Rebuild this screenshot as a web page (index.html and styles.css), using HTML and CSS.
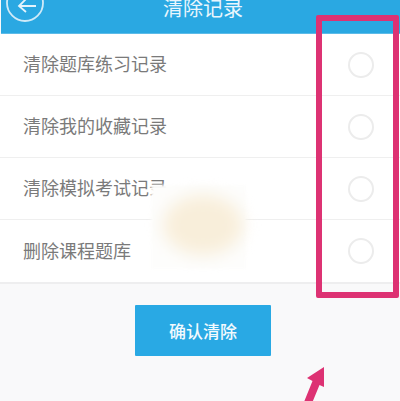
FILE: index.html
```html
<!DOCTYPE html>
<html lang="zh">
<head>
<meta charset="utf-8">
<title>清除记录</title>
<link rel="stylesheet" href="styles.css">
</head>
<body>
<div class="page">
  <header class="header">
    <svg class="back" width="44" height="33" viewBox="0 0 44 33" aria-hidden="true">
      <circle cx="24" cy="3" r="18" fill="none" stroke="#cfeaf8" stroke-width="1.8"/>
      <path d="M35 6H18M25 -1L18 6L25 12" fill="none" stroke="#e4f4fc" stroke-width="1.8"/>
    </svg>
    <h1 class="title">清除记录</h1>
  </header>
  <ul class="list">
    <li class="row"><span class="label">清除题库练习记录</span><i class="radio"></i></li>
    <li class="row"><span class="label">清除我的收藏记录</span><i class="radio"></i></li>
    <li class="row"><span class="label">清除模拟考试记录</span><i class="radio"></i></li>
    <li class="row"><span class="label">删除课程题库</span><i class="radio"></i></li>
  </ul>
  <div class="actions"><button class="confirm" type="button">确认清除</button></div>
  <div class="smudge"><div class="smudge-core"></div></div>
  <div class="marker"></div>
  <svg class="arrow" width="40" height="50" viewBox="0 0 40 50" aria-hidden="true">
    <path d="M22 1L5 12L10.500 15L2 36H10.500L17.500 19L22 21Z" fill="#dd3273"/>
  </svg>
</div>
</body>
</html>
```
FILE: styles.css
```css
* { box-sizing: border-box; }
html, body { margin: 0; padding: 0; }
body {
  background: #f9f9fa;
  font-family: "Noto Sans CJK SC", "Liberation Sans", sans-serif;
}
.page {
  position: relative;
  width: 400px;
  height: 401px;
  overflow: hidden;
}
.header {
  position: relative;
  height: 34px;
  margin-left: 1px;
  background: #2aa8e2;
  border-bottom: 1px solid #5cbbe8;
  display: flex;
  justify-content: center;
  align-items: flex-start;
  overflow: hidden;
}
.back {
  position: absolute;
  left: 0;
  top: 0;
}
.title {
  margin: -6px 0 0 5px;
  font-size: 20px;
  line-height: 28px;
  font-weight: 400;
  color: #e9f6fd;
}
.list {
  margin: 0;
  padding: 0;
  list-style: none;
  background: #fff;
  border-bottom: 2px solid #eeeeef;
}
.row {
  height: 62px;
  padding: 0 26px 0 23px;
  display: flex;
  align-items: center;
  justify-content: space-between;
  border-bottom: 1px solid #efefef;
  font-size: 18px;
  color: #7a7a7a;
}
.row:last-child { border-bottom: 0; height: 62px; }
.label { margin-bottom: 3px; }
.radio {
  width: 26px;
  height: 26px;
  border: 2px solid #ececec;
  border-radius: 50%;
}
.actions {
  padding-top: 21px;
  padding-left: 135px;
}
.confirm {
  width: 136px;
  height: 51px;
  border: 0;
  border-radius: 1px;
  background: #29a9e4;
  color: #f2fafe;
  font: 500 17px "Noto Sans CJK SC", "Liberation Sans", sans-serif;
}
.smudge {
  position: absolute;
  left: 151px;
  top: 185px;
  width: 95px;
  height: 84px;
  background: #fdfdfc;
  filter: blur(1.5px);
}
.smudge-core {
  position: absolute;
  left: 12px;
  top: 10px;
  width: 80px;
  height: 60px;
  border-radius: 50%;
  background: #f8eeda;
  filter: blur(8px);
}
.marker {
  position: absolute;
  left: 316px;
  top: 15px;
  width: 83px;
  height: 283px;
  border: 6px solid #dd3273;
  border-radius: 2px;
}
.arrow {
  position: absolute;
  left: 302px;
  top: 366px;
}
```
